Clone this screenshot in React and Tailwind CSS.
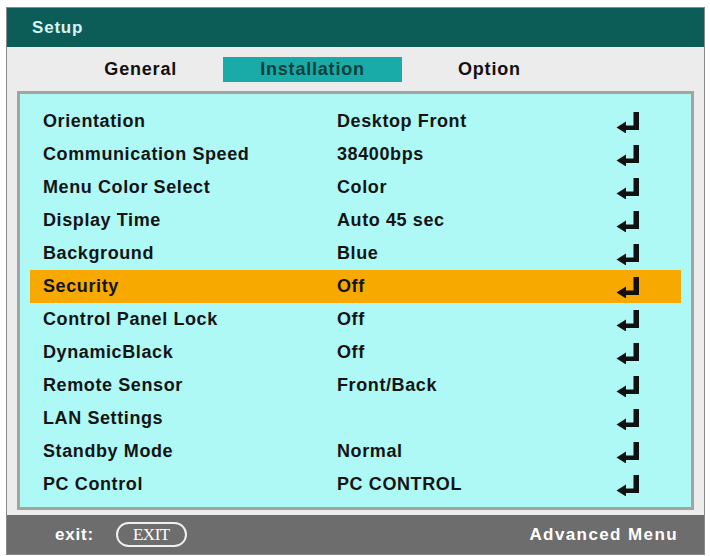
const rows = [
  ['Orientation', 'Desktop Front'],
  ['Communication Speed', '38400bps'],
  ['Menu Color Select', 'Color'],
  ['Display Time', 'Auto 45 sec'],
  ['Background', 'Blue'],
  ['Security', 'Off'],
  ['Control Panel Lock', 'Off'],
  ['DynamicBlack', 'Off'],
  ['Remote Sensor', 'Front/Back'],
  ['LAN Settings', ''],
  ['Standby Mode', 'Normal'],
  ['PC Control', 'PC CONTROL'],
]

function EnterIcon() {
  return (
    <svg width="25" height="22" viewBox="0 0 25 22" className="text-[#111]">
      <path d="M17.5 1h5.5v18H9v-4.5h8.5z" fill="currentColor" />
      <path d="M0.5 16.5L10 10.5v12z" fill="currentColor" />
    </svg>
  )
}

function Row({ label, value, active }) {
  return (
    <div className={`flex items-center h-[33px] mx-[10px] pl-[13px] ${active ? 'bg-[#f8a900]' : ''}`}>
      <span className="w-[294px]">{label}</span>
      <span className="w-[279px]">{value}</span>
      <EnterIcon />
    </div>
  )
}

export default function App() {
  return (
    <div className="w-[710px] h-[556px] bg-white pt-[7px] pl-[6px] font-['Liberation_Sans',Arial,sans-serif] font-bold">
      <div className="w-[699px] h-[548px] border border-[#8a8a8a] flex flex-col">
        <div className="h-[40px] bg-[#0c5c58] flex items-center pl-[25px] text-[17px] tracking-[0.8px] text-[#d9f3ef]">
          Setup
        </div>
        <div className="flex-1 bg-[#ececec] flex flex-col">
          <div className="h-[44px] flex items-center text-[18px] tracking-[0.8px] text-[#111]">
            <span className="w-[216px] text-right pr-[46px]">General</span>
            <span className="w-[179px] h-[25px] bg-[#18aba7] flex items-center justify-center text-[#0b3f3d]">
              Installation
            </span>
            <span className="pl-[56px]">Option</span>
          </div>
          <div className="mx-[10px] h-[419px] border-[3px] border-[#a3a3a3] bg-[#aef8f5] pt-[11px] text-[18px] tracking-[0.6px] text-[#141414]">
            {rows.map(([l, v]) => (
              <Row key={l} label={l} value={v} active={l === 'Security'} />
            ))}
          </div>
          <div className="h-[5px]" />
        </div>
        <div className="h-[40px] bg-[#6d6d6d] flex items-center pl-[48px] pr-[26px] text-white text-[17px] tracking-[0.8px]">
          <span>exit:</span>
          <span className="ml-[22px] h-[25px] px-[15px] border-2 border-[#f0f0f0] rounded-full flex items-center text-[17px] font-normal font-['Liberation_Serif',serif] tracking-[-0.5px]">
            EXIT
          </span>
          <span className="ml-auto tracking-[1.4px]">Advanced Menu</span>
        </div>
      </div>
    </div>
  )
}
